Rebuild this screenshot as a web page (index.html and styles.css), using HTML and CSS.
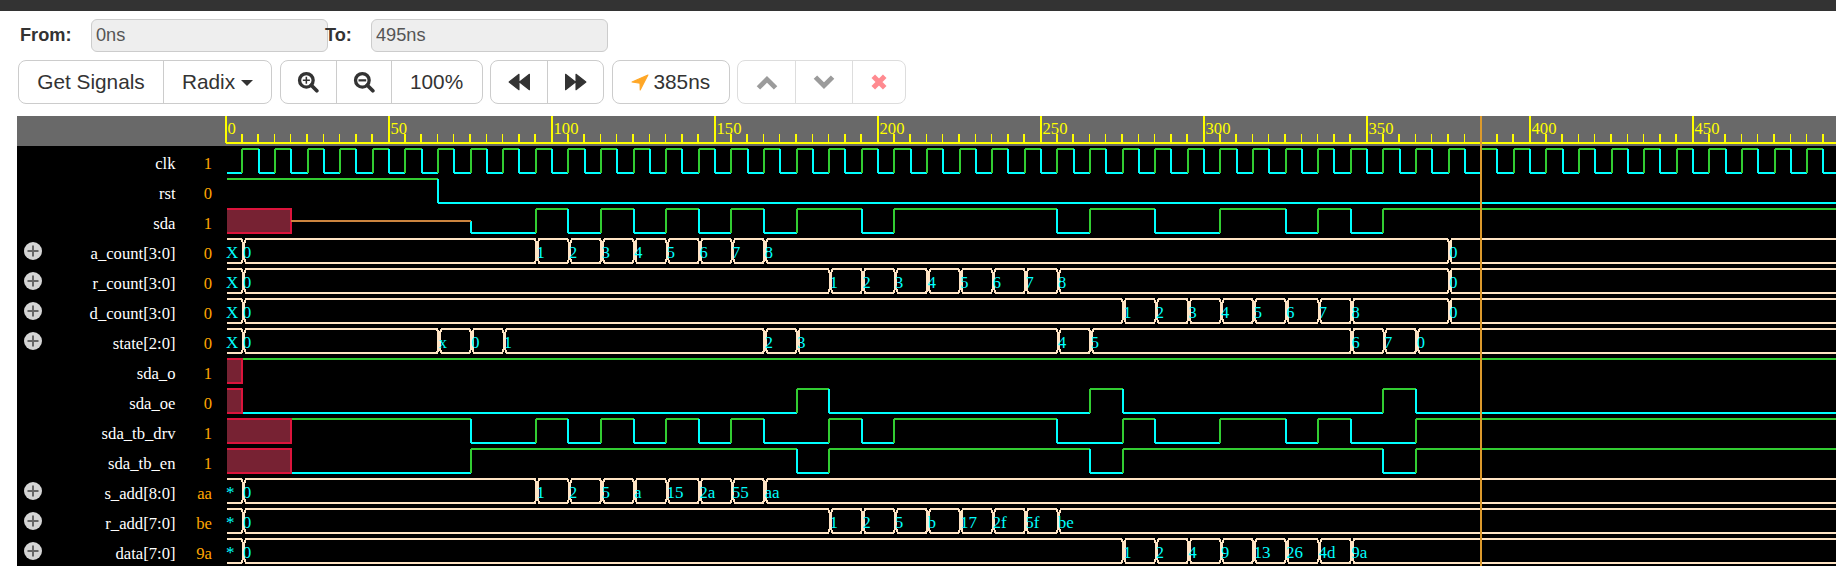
FILE: index.html
```html
<!DOCTYPE html>
<html lang="en">
<head>
    <meta charset="UTF-8">
    <title>Wave viewer</title>
    <link rel="stylesheet" href="styles.css">
</head>
<body>
<div class="topbar"></div>
<div class="range">
    <label class="range-from">From:</label>
    <input class="range-input" type="text" value="0ns" readonly>
    <label class="range-to">To:</label>
    <input class="range-input" type="text" value="495ns" readonly>
</div>
<div class="toolbar">
    <div class="btn-group">
        <button class="btn btn-signals">Get Signals</button>
        <button class="btn btn-radix">Radix<span class="caret"></span></button>
    </div>
    <div class="btn-group">
        <button class="btn btn-icon">
            <svg class="icon-zoom" viewBox="0 0 20 20">
                <circle class="glass" cx="8.5" cy="8.5" r="6.2"/>
                <path class="glass-mark" d="M5.3 8.5h6.4M8.5 5.3v6.4"/>
                <path class="glass-handle" d="M13 13l5 5"/>
            </svg>
        </button>
        <button class="btn btn-icon">
            <svg class="icon-zoom" viewBox="0 0 20 20">
                <circle class="glass" cx="8.5" cy="8.5" r="6.2"/>
                <path class="glass-mark glass-minus" d="M5 8.5h7"/>
                <path class="glass-handle" d="M13 13l5 5"/>
            </svg>
        </button>
        <button class="btn btn-percent">100%</button>
    </div>
    <div class="btn-group">
        <button class="btn btn-step">
            <svg class="icon-step" viewBox="0 0 20 16"><path d="M1 8L10 1v14zM10.500 8L19.500 1v14z"/></svg>
        </button>
        <button class="btn btn-step">
            <svg class="icon-step" viewBox="0 0 20 16"><path d="M19 8L10 1v14zM9.500 8L.5 1v14z"/></svg>
        </button>
    </div>
    <div class="btn-group">
        <button class="btn btn-cursor">
            <svg class="icon-arrow" viewBox="0 0 17 16"><path d="M16 1L1 7.500 8.500 8.700 8.700 15z"/></svg>385ns
        </button>
    </div>
    <div class="btn-group disabled">
        <button class="btn btn-move">
            <svg class="icon-chevron" viewBox="0 0 20 14"><path d="M2 12l8-8 8 8"/></svg>
        </button>
        <button class="btn btn-move">
            <svg class="icon-chevron" viewBox="0 0 20 14"><path d="M2 2l8 8 8-8"/></svg>
        </button>
        <button class="btn btn-remove">
            <svg class="icon-remove" viewBox="0 0 14 14"><path d="M2 2l10 10M12 2L2 12"/></svg>
        </button>
    </div>
</div>
<svg id="chart" class="chart" height="450" xmlns="http://www.w3.org/2000/svg"></svg>
<script src="wave.js"></script>
</body>
</html>
```

FILE: styles.css
```css
*{
    box-sizing: border-box;
}
html,body{
    margin: 0;
    padding: 0;
    height: 100%;
    background: #fff;
    overflow: hidden;
    font-family: "Liberation Sans", Arial, sans-serif;
    color: #333;
}
.topbar{
    height: 11px;
    background: #333;
}
.range{
    display: flex;
    align-items: center;
    height: 33px;
    margin-top: 8px;
    padding-left: 20px;
    font-size: 18.2px;
}
.range label{
    font-weight: bold;
}
.range-from{
    width: 71px;
}
.range-to{
    position: relative;
    width: 46px;
    margin-left: -3px;
}
.range-input{
    width: 237px;
    height: 33px;
    padding: 0 4px;
    background: #eee;
    border: 1px solid #ccc;
    border-radius: 6px;
    font: 18.2px "Liberation Sans", Arial, sans-serif;
    color: #555;
    outline: none;
}
.toolbar{
    display: flex;
    gap: 7.6px;
    height: 44px;
    margin-top: 8px;
    padding-left: 18px;
}
.btn-group{
    display: flex;
    border: 1px solid #ccc;
    border-radius: 8px;
}
.btn-group.disabled{
    opacity: .65;
}
.btn{
    display: flex;
    align-items: center;
    justify-content: center;
    height: 100%;
    padding: 0;
    background: none;
    border: none;
    border-left: 1px solid #ccc;
    font: 20.8px "Liberation Sans", Arial, sans-serif;
    color: #333;
}
.btn:first-child{
    border-left: none;
}
.btn-signals{
    width: 144px;
}
.btn-radix{
    width: 108px;
}
.caret{
    width: 0;
    height: 0;
    margin-left: 6px;
    margin-top: 1px;
    border-top: 6px solid #333;
    border-left: 6px solid transparent;
    border-right: 6px solid transparent;
}
.btn-icon{
    width: 55px;
}
.btn-percent{
    width: 91px;
}
.btn-step{
    width: 56px;
}
.btn-cursor{
    width: 116px;
}
.btn-move{
    width: 57px;
}
.btn-remove{
    width: 53px;
}
.icon-zoom{
    width: 22px;
    height: 22px;
}
.glass{
    fill: none;
    stroke: #333;
    stroke-width: 3;
}
.glass-mark{
    fill: none;
    stroke: #333;
    stroke-width: 1.4;
}
.glass-minus{
    stroke-width: 2;
}
.glass-handle{
    fill: none;
    stroke: #333;
    stroke-width: 3.4;
    stroke-linecap: round;
}
.icon-step{
    width: 22px;
    height: 18px;
    fill: #333;
    stroke: #333;
    stroke-linejoin: round;
}
.icon-arrow{
    width: 18px;
    height: 17px;
    margin-right: 4px;
    fill: #ffa726;
    stroke: #ffa726;
    stroke-linejoin: round;
}
.icon-chevron{
    width: 22px;
    height: 15px;
    fill: none;
    stroke: #666;
    stroke-width: 4.500;
}
.icon-remove{
    width: 16px;
    height: 16px;
    fill: none;
    stroke: #ff4d55;
    stroke-width: 4.400;
}
.chart{
    display: block;
    width: 1819px;
    margin: 12px 0 0 17px;
    background: #000;
}
.chart text{
    font-family: "Liberation Serif", "Times New Roman", serif;
    font-size: 16.64px;
}
.axis-bg{
    fill: #696969;
}
.tick{
    stroke: #ff0;
    stroke-width: 1.500;
    shape-rendering: crispEdges;
}
.tick-major,.axis-line{
    stroke: #ff0;
    stroke-width: 2;
    shape-rendering: crispEdges;
}
.axis-label{
    fill: #ff0;
}
.sig-name{
    fill: #fff;
    text-anchor: end;
}
.sig-value{
    fill: orange;
    text-anchor: end;
}
.expand-bg{
    fill: #d4d4d4;
}
.expand-mark{
    fill: none;
    stroke: #666;
    stroke-width: 2;
}
.high,.low,.bad-box,.bad-edge,.z-line,.bus{
    fill: none;
    stroke-width: 2;
    shape-rendering: crispEdges;
}
.high{
    stroke: #32cd32;
}
.low{
    stroke: cyan;
}
.bad-box{
    fill: #772233;
    stroke: none;
}
.bad-edge{
    stroke: #dc143c;
}
.z-line{
    stroke: #cd853f;
}
.bus{
    stroke: #ffe4c4;
}
.chart .bus-text{
    fill: cyan;
    font-size: 17px;
}
.cursor{
    stroke: #dc9a2c;
    stroke-width: 2;
    shape-rendering: crispEdges;
}
```

FILE: wave.js
```js
let NS = "http://www.w3.org/2000/svg";
let chart = document.getElementById("chart");

// px per ns, and where 0ns sits inside the svg
let scale = 3.26;
let x0 = 208.5;
let waveLeft = 210;
let chartWidth = 1819;
let rowTop = 33;
let rowGap = 30;
let rowHeight = 24;

function px(t) {
    return x0 + t * scale;
}

// the traces sit a little right of the axis ticks
function wx(t) {
    return px(t) + .5;
}

function add(tag, attrs, text) {
    let el = document.createElementNS(NS, tag);
    for (let k in attrs) {
        el.setAttribute(k, attrs[k]);
    }
    if (text !== undefined) {
        el.textContent = text;
    }
    chart.appendChild(el);
    return el;
}

// turns a list of change times into [time, level] pairs
function levels(first, times) {
    let list = [];
    let v = first;
    for (let i = 0; i < times.length; i++) {
        list.push([times[i], v]);
        v = 1 - v;
    }
    return list;
}

function counter(start, vals, step) {
    let list = [];
    for (let i = 0; i < vals.length; i++) {
        list.push([start + i * step, vals[i]]);
    }
    return list;
}

let clock = [0];
for (let t = 5; t < 560; t += 5) {
    clock.push(t);
}

let rows = [
    {name: "clk", value: "1", bits: levels(0, clock)},
    {name: "rst", value: "0", bits: levels(1, [0, 65])},
    {name: "sda", value: "1", bad: 20, z: 75, bits: levels(0, [75, 95, 105, 115, 125, 135, 145, 155, 165, 175, 195, 205, 255, 265, 285, 305, 325, 335, 345, 355])},
    {name: "a_count[3:0]", value: "0", bus: [[0, "X"], [5, "0"]].concat(counter(95, ["1", "2", "3", "4", "5", "6", "7", "8"], 10), [[375, "0"]])},
    {name: "r_count[3:0]", value: "0", bus: [[0, "X"], [5, "0"]].concat(counter(185, ["1", "2", "3", "4", "5", "6", "7", "8"], 10), [[375, "0"]])},
    {name: "d_count[3:0]", value: "0", bus: [[0, "X"], [5, "0"]].concat(counter(275, ["1", "2", "3", "4", "5", "6", "7", "8"], 10), [[375, "0"]])},
    {name: "state[2:0]", value: "0", bus: [[0, "X"], [5, "0"], [65, "x"], [75, "0"], [85, "1"], [165, "2"], [175, "3"], [255, "4"], [265, "5"], [345, "6"], [355, "7"], [365, "0"]]},
    {name: "sda_o", value: "1", bad: 5, bits: levels(1, [5])},
    {name: "sda_oe", value: "0", bad: 5, bits: levels(0, [5, 175, 185, 265, 275, 355, 365])},
    {name: "sda_tb_drv", value: "1", bad: 20, bits: levels(1, [20, 75, 95, 105, 115, 125, 135, 145, 155, 165, 185, 195, 205, 255, 275, 285, 305, 325, 335, 345, 365])},
    {name: "sda_tb_en", value: "1", bad: 20, bits: levels(0, [20, 75, 175, 185, 265, 275, 355, 365])},
    {name: "s_add[8:0]", value: "aa", bus: [[0, "*"], [5, "0"]].concat(counter(95, ["1", "2", "5", "a", "15", "2a", "55", "aa"], 10))},
    {name: "r_add[7:0]", value: "be", bus: [[0, "*"], [5, "0"]].concat(counter(185, ["1", "2", "5", "b", "17", "2f", "5f", "be"], 10))},
    {name: "data[7:0]", value: "9a", bus: [[0, "*"], [5, "0"]].concat(counter(275, ["1", "2", "4", "9", "13", "26", "4d", "9a"], 10))}
];

function drawAxis() {
    add("rect", {class: "axis-bg", x: 0, y: 0, width: chartWidth, height: 30});
    for (let t = 0; t * scale + x0 < chartWidth; t += 5) {
        let x = px(t);
        if (t % 50 == 0) {
            add("line", {class: "tick-major", x1: x, x2: x, y1: 0, y2: 27});
            add("text", {class: "axis-label", x: x + 2, y: 18}, t);
        } else {
            add("line", {class: "tick", x1: x, x2: x, y1: 18, y2: 27});
        }
    }
    add("line", {class: "axis-line", x1: x0, x2: chartWidth, y1: 27, y2: 27});
}

function drawBits(row, top) {
    let bottom = top + rowHeight;
    let list = row.bits;
    for (let i = 0; i < list.length; i++) {
        let t = list[i][0];
        let level = list[i][1];
        let end = i + 1 < list.length ? wx(list[i + 1][0]) : chartWidth;
        let y = level ? top : bottom;
        let x = Math.max(wx(t), waveLeft);
        if (t > 0 && t != row.bad) {
            let from = t == row.z ? top + rowHeight / 2 : (level ? bottom : top);
            add("line", {class: level ? "high" : "low", x1: x, x2: x, y1: from, y2: y});
        }
        add("line", {class: level ? "high" : "low", x1: x, x2: end, y1: y, y2: y});
    }
    if (row.bad) {
        // red box for the x state, open on the left
        let right = wx(row.bad);
        add("rect", {class: "bad-box", x: waveLeft, y: top, width: right - waveLeft, height: rowHeight});
        add("path", {class: "bad-edge", d: "M" + waveLeft + " " + top + "H" + right + "V" + bottom + "H" + waveLeft});
    }
    if (row.z) {
        add("line", {class: "z-line", x1: wx(row.bad), x2: wx(row.z), y1: top + 12, y2: top + 12});
    }
}

function drawBus(row, top) {
    let bottom = top + rowHeight;
    let mid1 = top + 4;
    let mid2 = bottom - 4;
    let list = row.bus;
    for (let i = 0; i < list.length; i++) {
        let a = wx(list[i][0]);
        let hasNext = i + 1 < list.length;
        let b = hasNext ? wx(list[i + 1][0]) : chartWidth + 5;
        let tail = "L" + (b - 1) + " " + top;
        let d = "";
        if (i == 0) {
            d = "M" + waveLeft + " " + top + tail + "L" + (b + .5) + " " + mid1 + "L" + (b + .5) + " " + mid2 + "L" + (b - 1) + " " + bottom + "L" + waveLeft + " " + bottom;
        } else {
            d = "M" + (b - 1) + " " + top + "L" + (a + 3.500) + " " + top + "L" + (a + 2) + " " + mid1 + "L" + (a + 2) + " " + mid2 + "L" + (a + 3.500) + " " + bottom + "L" + (b - 1) + " " + bottom;
            if (hasNext) {
                d += "L" + (b + .5) + " " + mid2 + "L" + (b + .5) + " " + mid1 + "Z";
            }
        }
        add("path", {class: "bus", d: d});
        let tx = i == 0 ? waveLeft - 1 : a + .5;
        add("text", {class: "bus-text", x: tx, y: top + 18.5}, list[i][1]);
    }
}

function drawRow(row, i) {
    let top = rowTop + i * rowGap;
    add("text", {class: "sig-name", x: 158.5, y: top + 20}, row.name);
    add("text", {class: "sig-value", x: 195, y: top + 20}, row.value);
    if (row.bus) {
        let cy = top + 12;
        add("circle", {class: "expand-bg", cx: 16, cy: cy, r: 9});
        add("path", {class: "expand-mark", d: "M10.500 " + cy + "h11M16 " + (cy - 5.500) + "v11"});
        drawBus(row, top);
    } else {
        drawBits(row, top);
    }
}

drawAxis();
for (let i = 0; i < rows.length; i++) {
    drawRow(rows[i], i);
}

// time cursor goes on top of everything
add("line", {class: "cursor", x1: px(385), x2: px(385), y1: 0, y2: 450});
```
